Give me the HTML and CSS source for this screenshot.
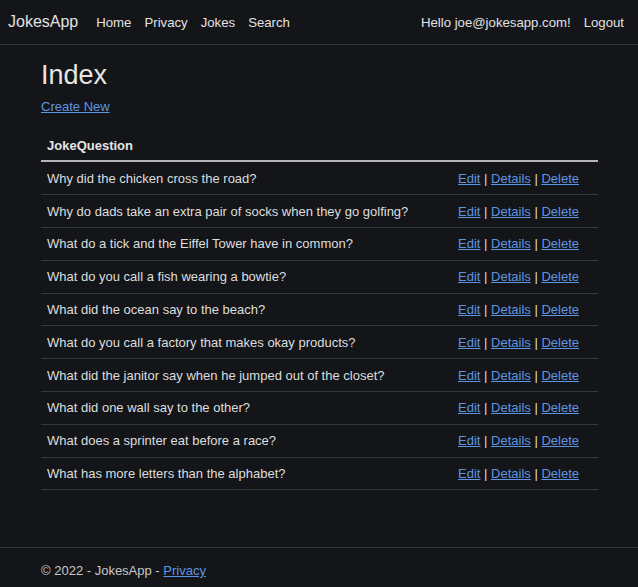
FILE: index.html
```html
<!DOCTYPE html>
<html>
<head>
<meta charset="utf-8">
<title>Index - JokesApp</title>
<link rel="stylesheet" href="styles.css">
</head>
<body>
<header class="navbar">
  <a class="brand" href="#">JokesApp</a>
  <nav class="nav-left">
    <a href="#">Home</a>
    <a href="#">Privacy</a>
    <a href="#">Jokes</a>
    <a href="#">Search</a>
  </nav>
  <nav class="nav-right">
    <a href="#">Hello joe@jokesapp.com!</a>
    <a href="#">Logout</a>
  </nav>
</header>
<main class="container">
  <h1 class="title">Index</h1>
  <p class="create"><a href="#">Create New</a></p>
  <table class="table">
    <thead>
      <tr><th>JokeQuestion</th><th></th></tr>
    </thead>
    <tbody>
      <tr><td>Why did the chicken cross the road?</td><td class="actions"><a href="#">Edit</a> | <a href="#">Details</a> | <a href="#">Delete</a></td></tr>
      <tr><td>Why do dads take an extra pair of socks when they go golfing?</td><td class="actions"><a href="#">Edit</a> | <a href="#">Details</a> | <a href="#">Delete</a></td></tr>
      <tr><td>What do a tick and the Eiffel Tower have in common?</td><td class="actions"><a href="#">Edit</a> | <a href="#">Details</a> | <a href="#">Delete</a></td></tr>
      <tr><td>What do you call a fish wearing a bowtie?</td><td class="actions"><a href="#">Edit</a> | <a href="#">Details</a> | <a href="#">Delete</a></td></tr>
      <tr><td>What did the ocean say to the beach?</td><td class="actions"><a href="#">Edit</a> | <a href="#">Details</a> | <a href="#">Delete</a></td></tr>
      <tr><td>What do you call a factory that makes okay products?</td><td class="actions"><a href="#">Edit</a> | <a href="#">Details</a> | <a href="#">Delete</a></td></tr>
      <tr><td>What did the janitor say when he jumped out of the closet?</td><td class="actions"><a href="#">Edit</a> | <a href="#">Details</a> | <a href="#">Delete</a></td></tr>
      <tr><td>What did one wall say to the other?</td><td class="actions"><a href="#">Edit</a> | <a href="#">Details</a> | <a href="#">Delete</a></td></tr>
      <tr><td>What does a sprinter eat before a race?</td><td class="actions"><a href="#">Edit</a> | <a href="#">Details</a> | <a href="#">Delete</a></td></tr>
      <tr><td>What has more letters than the alphabet?</td><td class="actions"><a href="#">Edit</a> | <a href="#">Details</a> | <a href="#">Delete</a></td></tr>
    </tbody>
  </table>
</main>
<footer class="footer">
  <div class="footer-inner">© 2022 - JokesApp - <a href="#">Privacy</a></div>
</footer>
</body>
</html>
```

FILE: styles.css
```css
html, body {
  margin: 0;
  padding: 0;
  height: 100%;
}
body {
  background: #131519;
  color: #dcdcdc;
  font-family: "Liberation Sans", Arial, sans-serif;
  font-size: 13px;
  display: flex;
  flex-direction: column;
}
a { color: #5f95e0; }

.navbar {
  height: 44px;
  border-bottom: 1px solid #34363a;
  display: flex;
  align-items: center;
  padding: 0 14px 0 8px;
}
.navbar a {
  color: #e2e2e2;
  text-decoration: none;
}
.brand {
  font-size: 16px;
  margin-right: 18px;
}
.nav-left, .nav-right {
  display: flex;
  gap: 13px;
  font-size: 13.2px;
}
.nav-right {
  margin-left: auto;
}

.container {
  width: 557px;
  margin: 0 auto 0 41px;
  flex: 1;
}
.title {
  font-size: 27px;
  font-weight: 500;
  margin: 14px 0 8px;
  line-height: 1.2;
  color: #e6e6e6;
}
.create {
  margin: 0 0 17px;
  font-size: 13px;
}
.table {
  width: 100%;
  border-collapse: collapse;
}
.table th {
  text-align: left;
  font-weight: bold;
  padding: 0 6px;
  height: 29px;
  border-bottom: 2px solid #b5b5b5;
  color: #e6e6e6;
}
.table td {
  padding: 0 6px;
  height: 31.8px;
  border-bottom: 1px solid #35373b;
  color: #dedede;
}
.table td.actions {
  text-align: right;
  padding-right: 19px;
  white-space: nowrap;
  color: #dedede;
}

.footer {
  border-top: 1px solid #34363a;
  height: 39px;
}
.footer-inner {
  padding: 15px 0 0 41px;
  color: #c8c8c8;
  font-size: 13px;
}
```
